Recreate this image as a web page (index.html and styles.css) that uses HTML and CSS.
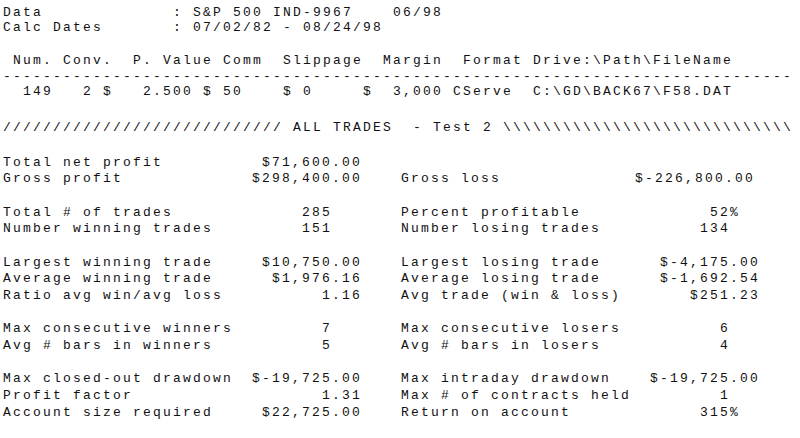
FILE: index.html
```html
<!DOCTYPE html>
<html lang="en">
<head>
<meta charset="utf-8">
<title>System Report - All Trades</title>
<link rel="stylesheet" href="styles.css">
</head>
<body>
<main class="report">
  <section class="meta">
    <div class="line">Data             : S&amp;P 500 IND-9967    06/98</div>
    <div class="line">Calc Dates       : 07/02/82 - 08/24/98</div>
  </section>

  <section class="setup">
    <div class="line"> Num. Conv.  P. Value Comm  Slippage  Margin  Format Drive:\Path\FileName</div>
    <div class="line">-------------------------------------------------------------------------------</div>
    <div class="line">  149   2 $   2.500 $ 50    $ 0     $  3,000 CServe  C:\GD\BACK67\F58.DAT</div>
  </section>

  <div class="banner line">//////////////////////////// ALL TRADES  - Test 2 \\\\\\\\\\\\\\\\\\\\\\\\\\\\\</div>

  <section class="stats">
    <div class="group">
      <div class="pair"><span class="label">Total net profit</span><span class="value">$71,600<span class="frac">.00</span></span></div>
      <div class="pair"></div>
      <div class="pair"><span class="label">Gross profit</span><span class="value">$298,400<span class="frac">.00</span></span></div>
      <div class="pair"><span class="label">Gross loss</span><span class="value value-inset">$-226,800<span class="frac">.00</span></span></div>
    </div>

    <div class="group">
      <div class="pair"><span class="label">Total # of trades</span><span class="value">285<span class="frac"></span></span></div>
      <div class="pair"><span class="label">Percent profitable</span><span class="value">52<span class="frac">%</span></span></div>
      <div class="pair"><span class="label">Number winning trades</span><span class="value">151<span class="frac"></span></span></div>
      <div class="pair"><span class="label">Number losing trades</span><span class="value">134<span class="frac"></span></span></div>
    </div>

    <div class="group">
      <div class="pair"><span class="label">Largest winning trade</span><span class="value">$10,750<span class="frac">.00</span></span></div>
      <div class="pair"><span class="label">Largest losing trade</span><span class="value">$-4,175<span class="frac">.00</span></span></div>
      <div class="pair"><span class="label">Average winning trade</span><span class="value">$1,976<span class="frac">.16</span></span></div>
      <div class="pair"><span class="label">Average losing trade</span><span class="value">$-1,692<span class="frac">.54</span></span></div>
      <div class="pair"><span class="label">Ratio avg win/avg loss</span><span class="value">1<span class="frac">.16</span></span></div>
      <div class="pair"><span class="label">Avg trade (win &amp; loss)</span><span class="value">$251<span class="frac">.23</span></span></div>
    </div>

    <div class="group">
      <div class="pair"><span class="label">Max consecutive winners</span><span class="value">7<span class="frac"></span></span></div>
      <div class="pair"><span class="label">Max consecutive losers</span><span class="value">6<span class="frac"></span></span></div>
      <div class="pair"><span class="label">Avg # bars in winners</span><span class="value">5<span class="frac"></span></span></div>
      <div class="pair"><span class="label">Avg # bars in losers</span><span class="value">4<span class="frac"></span></span></div>
    </div>

    <div class="group">
      <div class="pair"><span class="label">Max closed-out drawdown</span><span class="value">$-19,725<span class="frac">.00</span></span></div>
      <div class="pair"><span class="label">Max intraday drawdown</span><span class="value">$-19,725<span class="frac">.00</span></span></div>
      <div class="pair"><span class="label">Profit factor</span><span class="value">1<span class="frac">.31</span></span></div>
      <div class="pair"><span class="label">Max # of contracts held</span><span class="value">1<span class="frac"></span></span></div>
      <div class="pair"><span class="label">Account size required</span><span class="value">$22,725<span class="frac">.00</span></span></div>
      <div class="pair"><span class="label">Return on account</span><span class="value">315<span class="frac">%</span></span></div>
    </div>
  </section>
</main>
</body>
</html>
```

FILE: styles.css
```css
html, body {
  margin: 0;
  padding: 0;
  background: #ffffff;
}

body {
  width: 800px;
  height: 438px;
  overflow: hidden;
}

.report {
  padding: 5px 0 0 3px;
  font-family: "Liberation Mono", "DejaVu Sans Mono", monospace;
  font-size: 13px;
  letter-spacing: 2.2px;
  color: #111111;
}

.line {
  white-space: pre;
}

.meta {
  line-height: 15px;
}

.setup {
  margin-top: 18px;
  line-height: 15.5px;
}

.banner {
  margin-top: 20.5px;
  line-height: 15.5px;
}

.stats {
  margin-top: 19px;
  display: flex;
  flex-direction: column;
  row-gap: 16.67px;
  line-height: 16.67px;
}

.group {
  display: grid;
  grid-template-columns: 359px 359px;
  column-gap: 39px;
}

.pair {
  display: flex;
  justify-content: space-between;
  white-space: pre;
}

.value-inset {
  padding-right: 5px;
}

.frac {
  display: inline-block;
  width: 30px;
  text-align: left;
}
```
